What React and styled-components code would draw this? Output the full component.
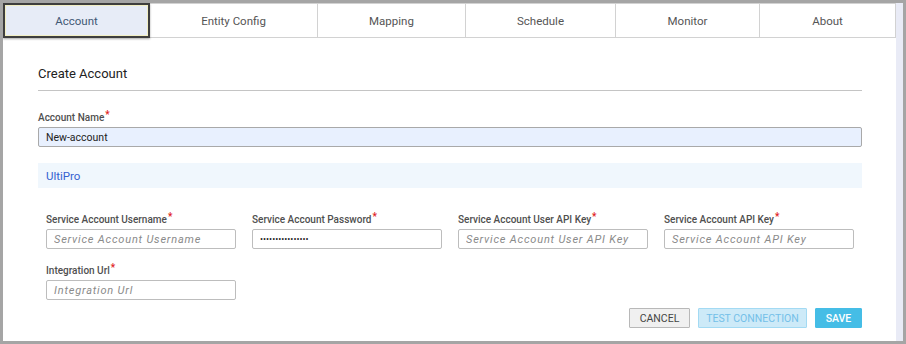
import React from "react";
import styled, { createGlobalStyle } from "styled-components";

const GlobalStyle = createGlobalStyle`
  html, body {
    margin: 0;
    padding: 0;
    background: #a5a5a5;
  }
  * {
    box-sizing: border-box;
  }
`;

const Frame = styled.div`
  width: 906px;
  height: 344px;
  border: 3px solid #a5a5a5;
  display: flex;
  background: #fff;
  font-family: Roboto, "Liberation Sans", sans-serif;
  overflow: hidden;
`;

const Main = styled.div`
  flex: 1;
  display: flex;
  flex-direction: column;
`;

const Track = styled.div`
  width: 7px;
  background: #e9ebf6;
`;

const TabBar = styled.div`
  display: grid;
  grid-template-columns: 147px 168px 148px 150px 144px 1fr;
  height: 35px;
`;

const Tab = styled.div`
  display: flex;
  align-items: center;
  justify-content: center;
  padding-top: 1px;
  font-size: 11.5px;
  color: ${p => (p.$active ? "#3f5874" : "#555")};
  background: ${p => (p.$active ? "#e7ecf7" : "#fff")};
  border: 1px solid #d2d2d2;
  border-left: none;
  ${p =>
    p.$active &&
    `
    border: 2px solid #3e3e3e;
    box-shadow: inset 0 0 0 1px #f2efc4, 0 1px 2px rgba(0,0,0,0.35);
    position: relative;
    z-index: 1;
  `}
`;

const Content = styled.div`
  padding: 0 34px 0 35px;
  display: flex;
  flex-direction: column;
`;

const Title = styled.h2`
  margin: 27px 0 0;
  font-size: 13px;
  font-weight: 400;
  color: #222;
  line-height: 18px;
  padding-bottom: 7px;
  border-bottom: 1px solid #c4c4c4;
`;

const Label = styled.label`
  display: block;
  font-size: 10px;
  font-weight: 500;
  color: #4f4f4f;
  line-height: 13px;
  margin-bottom: 3px;
  & span {
    color: #e02020;
    margin-left: 1px;
    position: relative;
    top: -3px;
  }
`;

const NameGroup = styled.div`
  margin-top: 20px;
`;

const Input = styled.input`
  display: block;
  width: 100%;
  height: 20px;
  border: 1px solid ${p => (p.$filled ? "#a9a9a9" : "#bdbdbd")};
  border-radius: 2px;
  background: ${p => (p.$filled ? "#e8f0fe" : "#fff")};
  font-family: Roboto, "Liberation Sans", sans-serif;
  font-size: 10.5px;
  color: #222;
  padding: 0 7px;
  outline: none;
  &::placeholder {
    font-style: italic;
    font-size: 11px;
    letter-spacing: 0.8px;
    color: #8a8a8a;
  }
  &[type="password"] {
    font-size: 9px;
    letter-spacing: 0;
  }
`;

const Section = styled.div`
  margin-top: 16px;
  height: 25px;
  background: #f0f7fd;
  display: flex;
  align-items: center;
  padding-left: 8px;
  font-size: 11.5px;
  color: #3561d0;
`;

const Fields = styled.div`
  display: grid;
  grid-template-columns: repeat(4, 1fr);
  column-gap: 16px;
  row-gap: 15px;
  padding: 0 8px;
  margin-top: 25px;
`;

const Actions = styled.div`
  display: flex;
  justify-content: flex-end;
  gap: 8px;
  margin-top: 8px;
`;

const Button = styled.button`
  height: 20px;
  width: ${p => p.$w}px;
  padding: 0;
  font-family: Roboto, "Liberation Sans", sans-serif;
  font-size: 10.5px;
  text-transform: uppercase;
  border-radius: 1px;
  cursor: pointer;
  ${p =>
    p.$variant === "default" &&
    `background: #f0f0f0; border: 1px solid #b8b8b8; color: #444;`}
  ${p =>
    p.$variant === "light" &&
    `background: #cdeaf8; border: 1px solid #a3daf3; color: #74c0e8;`}
  ${p =>
    p.$variant === "primary" &&
    `background: #45bde6; border: 1px solid #45bde6; color: #fff; font-weight: 500;`}
`;

const tabs = ["Account", "Entity Config", "Mapping", "Schedule", "Monitor", "About"];

const fields = [
  { label: "Service Account Username", placeholder: "Service Account Username" },
  { label: "Service Account Password", type: "password" },
  { label: "Service Account User API Key", placeholder: "Service Account User API Key" },
  { label: "Service Account API Key", placeholder: "Service Account API Key" },
  { label: "Integration Url", placeholder: "Integration Url" },
];

const App = () => {
  return (
    <>
      <GlobalStyle />
      <Frame>
        <Main>
          <TabBar>
            {tabs.map((t, i) => (
              <Tab key={t} $active={i === 0}>
                {t}
              </Tab>
            ))}
          </TabBar>
          <Content>
            <Title>Create Account</Title>
            <NameGroup>
              <Label>
                Account Name<span>*</span>
              </Label>
              <Input $filled defaultValue="New-account" />
            </NameGroup>
            <Section>UltiPro</Section>
            <Fields>
              {fields.map(f => (
                <div key={f.label}>
                  <Label>
                    {f.label}
                    <span>*</span>
                  </Label>
                  <Input
                    type={f.type || "text"}
                    placeholder={f.placeholder}
                    defaultValue={f.type === "password" ? "passwordpassword" : undefined}
                  />
                </div>
              ))}
            </Fields>
            <Actions>
              <Button $variant="default" $w={61}>Cancel</Button>
              <Button $variant="light" $w={109}>Test Connection</Button>
              <Button $variant="primary" $w={47}>Save</Button>
            </Actions>
          </Content>
        </Main>
        <Track />
      </Frame>
    </>
  );
};

export default App;
